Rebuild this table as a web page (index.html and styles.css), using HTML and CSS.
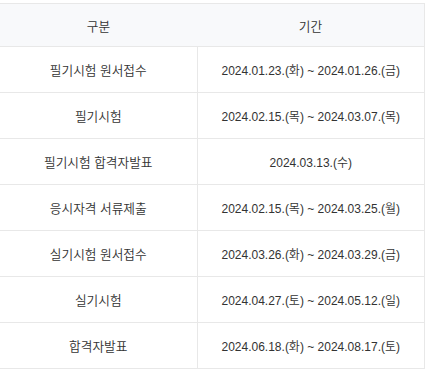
FILE: index.html
```html
<!DOCTYPE html>
<html lang="ko">
<head>
<meta charset="utf-8">
<link rel="stylesheet" href="styles.css">
</head>
<body>
<div class="wrap">
<table class="sched">
<thead>
<tr><th class="c1">구분</th><th class="c2">기간</th></tr>
</thead>
<tbody>
<tr><td class="name">필기시험 원서접수</td><td class="date">2024.01.23.(화) ~ 2024.01.26.(금)</td></tr>
<tr><td class="name">필기시험</td><td class="date">2024.02.15.(목) ~ 2024.03.07.(목)</td></tr>
<tr><td class="name">필기시험 합격자발표</td><td class="date">2024.03.13.(수)</td></tr>
<tr><td class="name">응시자격 서류제출</td><td class="date">2024.02.15.(목) ~ 2024.03.25.(월)</td></tr>
<tr><td class="name">실기시험 원서접수</td><td class="date">2024.03.26.(화) ~ 2024.03.29.(금)</td></tr>
<tr><td class="name">실기시험</td><td class="date">2024.04.27.(토) ~ 2024.05.12.(일)</td></tr>
<tr><td class="name">합격자발표</td><td class="date">2024.06.18.(화) ~ 2024.08.17.(토)</td></tr>
</tbody>
</table>
</div>
</body>
</html>
```
FILE: styles.css
```css
html, body {
  margin: 0;
  padding: 0;
  background: #ffffff;
}
.wrap {
  padding-top: 3px;
}
.sched {
  width: 425px;
  border-collapse: collapse;
  table-layout: fixed;
  font-family: "Liberation Sans", "Noto Sans CJK KR", sans-serif;
  font-size: 12.7px;
  font-weight: 350;
  color: #333333;
  border-top: 1px solid #e8e8e8;
  border-right: 1px solid #e8e8e8;
}
.sched th {
  background: #f8f9fb;
  font-weight: 350;
  height: 42px;
  padding: 0;
  text-align: center;
  border-bottom: 1px solid #e8e8e8;
}
.sched .c1 { width: 197px; }
.sched td {
  height: 45px;
  padding: 0;
  text-align: center;
  border-bottom: 1px solid #e8e8e8;
}
.sched td.date {
  font-size: 12px;
  border-left: 1px solid #e8e8e8;
}
```
